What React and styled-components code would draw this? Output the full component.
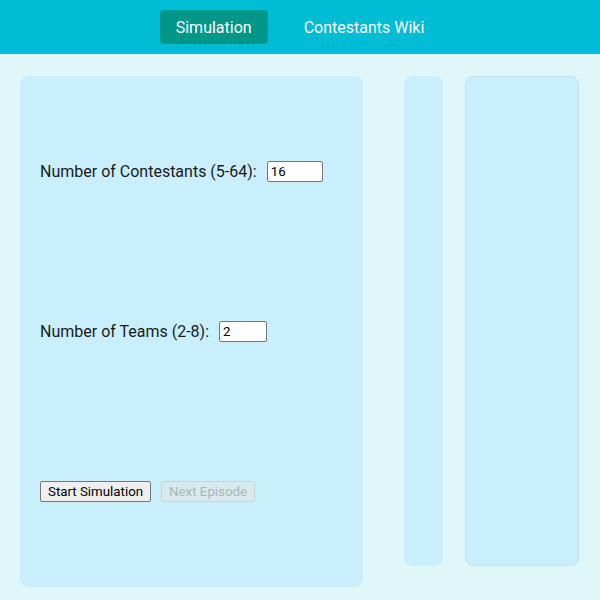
import React, { useState } from 'react';
import styled, { createGlobalStyle } from 'styled-components';

const GlobalStyle = createGlobalStyle`
  html, body {
    margin: 0;
    padding: 0;
    background-color: #e0f7fa;
    font-family: Roboto, 'Noto Sans', sans-serif;
  }
`;

const Page = styled.div`
  width: 600px;
  height: 600px;
  display: flex;
  flex-direction: column;
  overflow: hidden;
`;

const NavBar = styled.nav`
  height: 54px;
  flex-shrink: 0;
  background-color: #00bcd4;
  display: flex;
  justify-content: center;
  align-items: center;
  gap: 20px;
`;

const NavTab = styled.button`
  border: none;
  border-radius: 4px;
  padding: 8px 16px;
  height: 34px;
  font-family: Roboto, sans-serif;
  font-size: 16px;
  color: #ffffff;
  background-color: ${(p) => (p.$active ? '#009688' : 'transparent')};
  cursor: pointer;
`;

const Main = styled.main`
  flex: 1;
  display: flex;
  padding: 22px 21px 14px 20px;
  align-items: flex-start;
`;

const Panel = styled.section`
  flex-shrink: 0;
  background-color: #c9effd;
  border-radius: 8px;
  box-sizing: border-box;
  width: ${(p) => p.$width}px;
  height: ${(p) => p.$height}px;
  margin-left: ${(p) => p.$offset || 0}px;
  border: ${(p) => (p.$outlined ? '1px solid #c1e2ea' : 'none')};
`;

const ControlPanel = styled(Panel)`
  display: flex;
  flex-direction: column;
  padding: 15px 20px 15px 20px;
`;

const Row = styled.div`
  flex: 1;
  display: flex;
  align-items: center;
  gap: 10px;
`;

const Label = styled.label`
  font-size: 16px;
  color: #1a1a1a;
`;

const NumberInput = styled.input`
  box-sizing: border-box;
  width: ${(p) => p.$width}px;
  height: 21px;
  padding: 1px 3px;
  font-family: Roboto, sans-serif;
  font-size: 13.3px;
  color: #000;
  background: #fff;
  border: 1px solid #767676;
  border-radius: 2px;
`;

const ActionButton = styled.button`
  box-sizing: border-box;
  height: 21px;
  padding: 0 7px;
  font-family: Roboto, sans-serif;
  font-size: 13.3px;
  color: #000;
  background-color: #efefef;
  border: 1px solid #767676;
  border-radius: 2px;

  &:disabled {
    color: #a6b6bb;
    background-color: #d9eaef;
    border-color: #c3d5da;
  }
`;

export default function App() {
  const [contestants, setContestants] = useState('16');
  const [teams, setTeams] = useState('2');

  return (
    <Page>
      <GlobalStyle />
      <NavBar>
        <NavTab $active>Simulation</NavTab>
        <NavTab>Contestants Wiki</NavTab>
      </NavBar>
      <Main>
        <ControlPanel $width={343} $height={511}>
          <Row>
            <Label htmlFor="contestants">Number of Contestants (5-64):</Label>
            <NumberInput
              id="contestants"
              $width={56}
              value={contestants}
              onChange={(e) => setContestants(e.target.value)}
            />
          </Row>
          <Row>
            <Label htmlFor="teams">Number of Teams (2-8):</Label>
            <NumberInput
              id="teams"
              $width={48}
              value={teams}
              onChange={(e) => setTeams(e.target.value)}
            />
          </Row>
          <Row>
            <ActionButton>Start Simulation</ActionButton>
            <ActionButton disabled>Next Episode</ActionButton>
          </Row>
        </ControlPanel>
        <Panel $width={39} $height={490} $offset={41} />
        <Panel $width={114} $height={490} $offset={22} $outlined />
      </Main>
    </Page>
  );
}
